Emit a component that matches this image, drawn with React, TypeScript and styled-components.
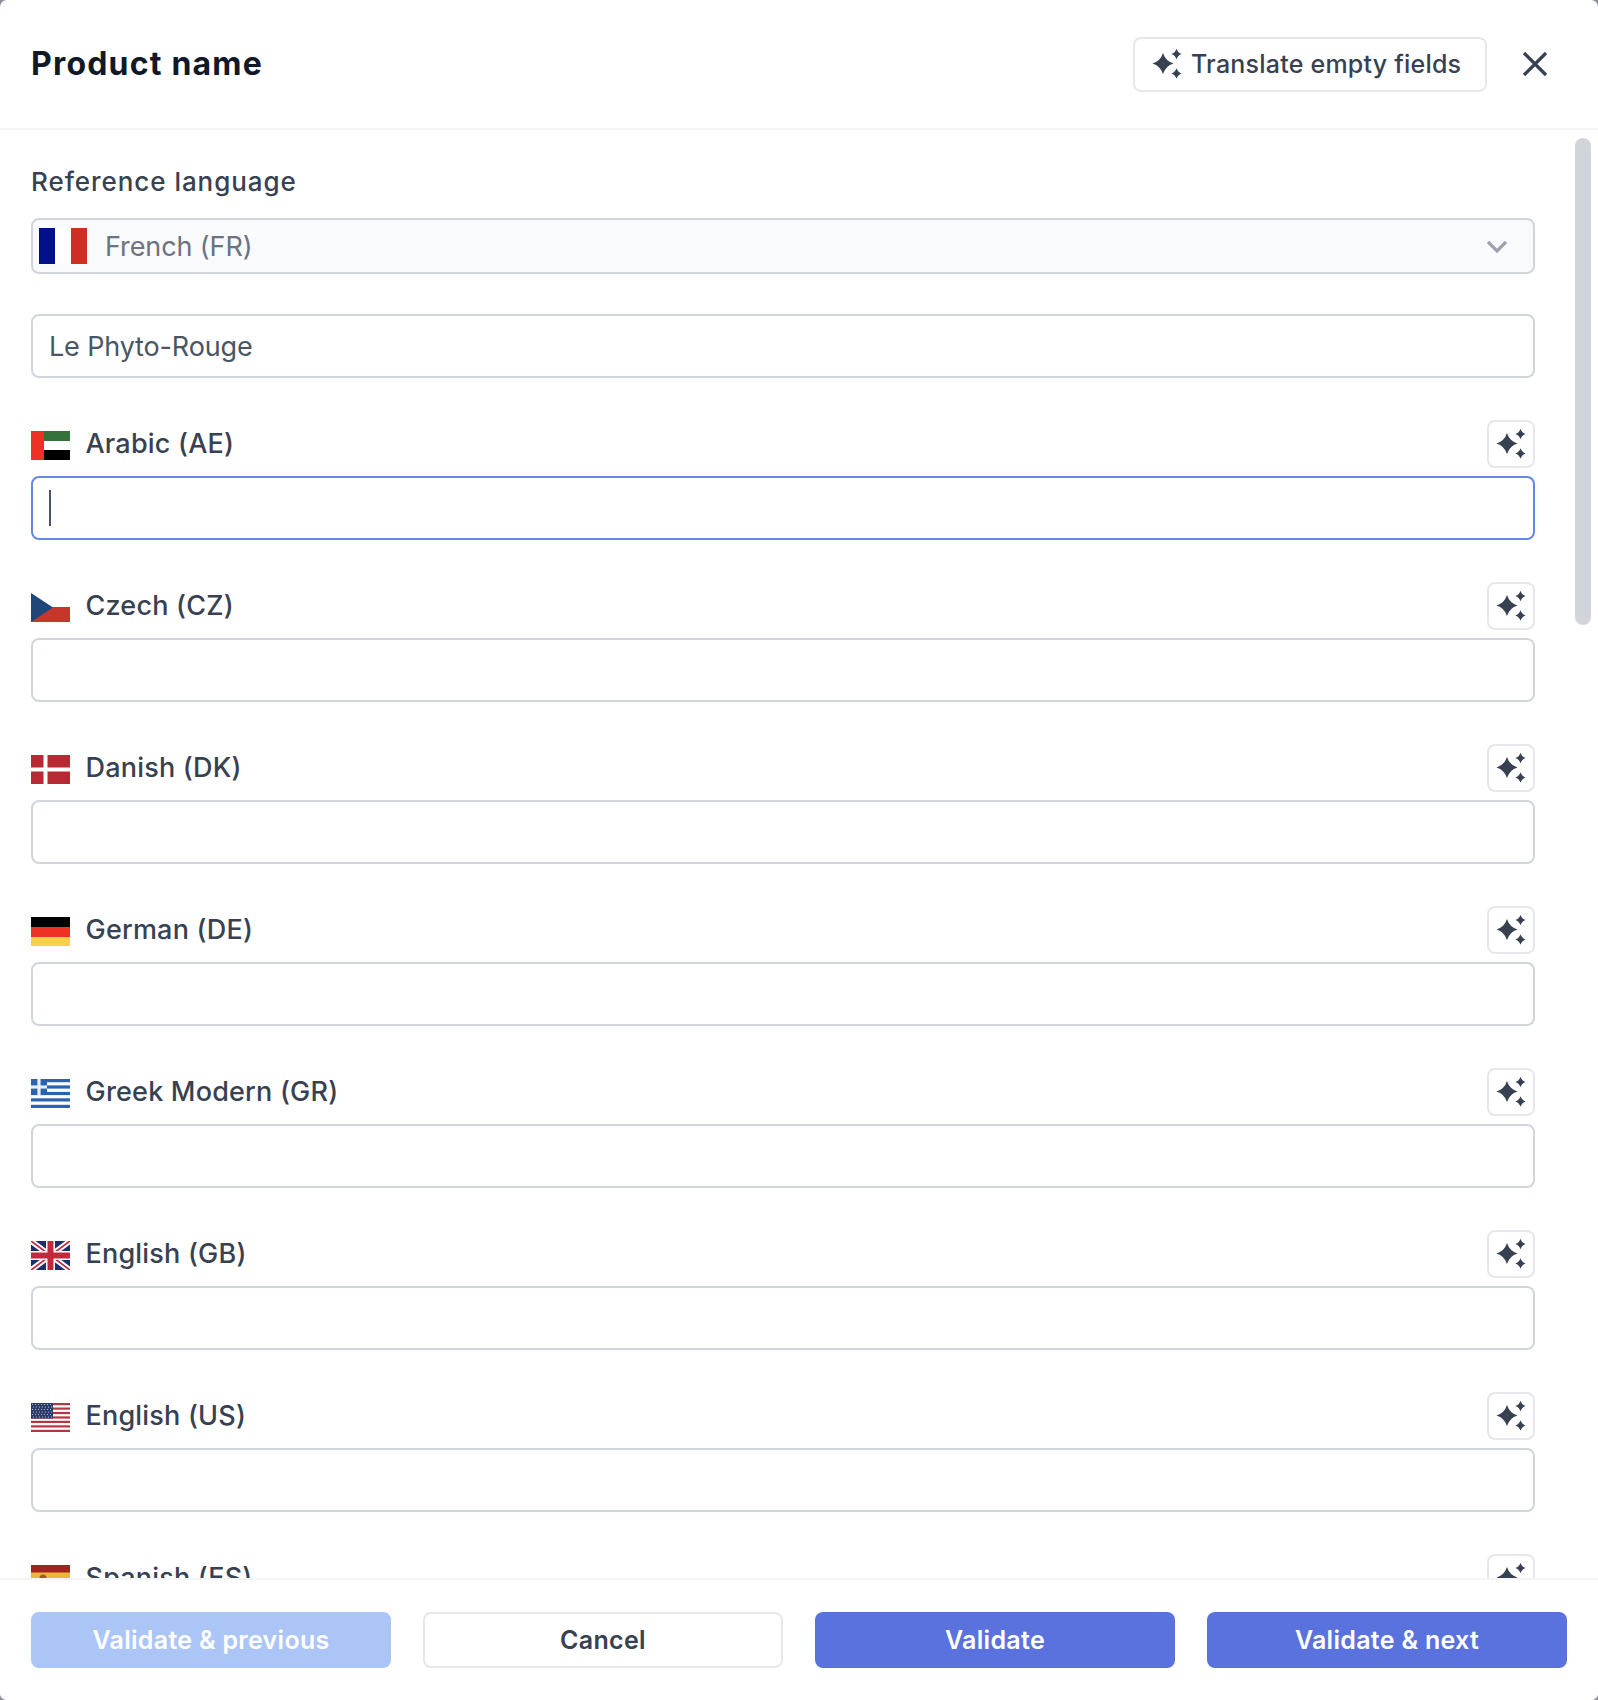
import React from "react";
import styled, { createGlobalStyle } from "styled-components";

const Global = createGlobalStyle`
  html, body { margin: 0; padding: 0; background: #8b8f96; }
  * { box-sizing: border-box; }
  #root { width: 1598px; height: 1700px; font-family: Inter, "Liberation Sans", sans-serif; }
`;

const Modal = styled.div`
  width: 1598px; height: 1700px; background: #fff; border-radius: 7px;
  display: flex; flex-direction: column; overflow: hidden;
`;
const Header = styled.header`
  flex: none; height: 130px; border-bottom: 2px solid #f3f4f6;
  padding: 0 31px; display: flex; align-items: center;
`;
const Title = styled.h1`
  margin: 0; flex: 1; font-size: 32px; font-weight: 700; color: #111827; letter-spacing: 1.2px; line-height: 40px;
`;
const TranslateButton = styled.button`
  height: 55px; width: 354px; border: 2px solid #e5e7eb; border-radius: 8px; background: #fff;
  display: flex; align-items: center; padding: 0 0 0 17px; gap: 9px; font: inherit;
  font-size: 25px; font-weight: 500; color: #374151; letter-spacing: 0.22px; white-space: nowrap;
`;
const CloseButton = styled.button`
  width: 60px; height: 60px; margin-left: 18px; margin-right: 2px; border: 0; background: none; padding: 0;
  display: flex; align-items: center; justify-content: center; color: #374151;
`;
const Body = styled.main`
  flex: 1; min-height: 0; position: relative; overflow: hidden; padding: 34px 63px 0 31px;
`;
const ScrollThumb = styled.div`
  position: absolute; top: 8px; right: 7px; width: 16px; height: 487px; background: #d1d5db; border-radius: 8px;
`;
const SectionLabel = styled.div`
  font-size: 26px; font-weight: 500; line-height: 36px; color: #374151; margin-bottom: 18px; letter-spacing: 0.95px;
`;
const Select = styled.div`
  height: 56px; background: #f9fafb; border: 2px solid #d1d5db; border-radius: 8px;
  display: flex; align-items: center; padding: 0 26px 0 6px; margin-bottom: 40px;
`;
const SelectText = styled.span`
  flex: 1; margin-left: 18px; font-size: 27px; color: #6b7280; letter-spacing: -0.1px;
`;
const Field = styled.div<{ $focus?: boolean }>`
  height: 64px; background: #fff; border: 2px solid ${(p) => (p.$focus ? "#6687e8" : "#d1d5db")};
  border-radius: 8px; display: flex; align-items: center; padding: 0 16px;
  font-size: 27px; color: #4b5563; margin-bottom: 42px; letter-spacing: -0.15px;
`;
const Caret = styled.span`
  width: 2px; height: 36px; background: #475569;
`;
const RowHead = styled.div`
  height: 48px; margin-bottom: 8px; display: flex; align-items: center; gap: 16px;
`;
const FlagBox = styled.span`
  flex: none; display: flex; width: 39px; height: 29px; margin-top: 3px;
`;
const LangName = styled.span`
  flex: 1; font-size: 27px; font-weight: 500; color: #374151; letter-spacing: 0.2px; margin-top: -2px; margin-left: -0.5px;
`;
const MagicButton = styled.button`
  flex: none; width: 48px; height: 48px; border: 2px solid #e5e7eb; border-radius: 8px; background: #fff;
  padding: 0; display: flex; align-items: center; justify-content: center;
`;
const Footer = styled.footer`
  flex: none; height: 122px; border-top: 2px solid #f3f4f6; background: #fff;
  padding: 32px 31px; display: grid; grid-template-columns: repeat(4, 360px); gap: 32px;
`;
const FootButton = styled.button<{ $kind: "primary" | "disabled" | "ghost" }>`
  height: 56px; border-radius: 8px; font: inherit; font-size: 25px; font-weight: 600; padding: 0; letter-spacing: 0.3px;
  border: ${(p) => (p.$kind === "ghost" ? "2px solid #e5e7eb" : "0")};
  background: ${(p) => (p.$kind === "primary" ? "#5a72de" : p.$kind === "disabled" ? "#abc5f6" : "#fff")};
  color: ${(p) => (p.$kind === "ghost" ? "#374151" : "#fff")};
`;

const star = (cx: number, cy: number, r: number) => {
  const k = r * 0.24;
  return `M${cx} ${cy - r}Q${cx + k} ${cy - k} ${cx + r} ${cy}Q${cx + k} ${cy + k} ${cx} ${cy + r}Q${cx - k} ${cy + k} ${cx - r} ${cy}Q${cx - k} ${cy - k} ${cx} ${cy - r}Z`;
};
const Sparkles = () => (
  <svg width="30" height="30" viewBox="0 0 30 30" fill="#374151" style={{ flex: "none" }}>
    <path d={star(11, 14.5, 10.5)} />
    <path d={star(24.5, 5, 5.2)} />
    <path d={star(24.5, 24.5, 5.2)} />
  </svg>
);

const F = ({ children, w = 39, h = 29 }: { children: React.ReactNode; w?: number; h?: number }) => (
  <svg width={w} height={h} viewBox={`0 0 ${w} ${h}`} preserveAspectRatio="none">{children}</svg>
);

const Flags: Record<string, React.ReactNode> = {
  AE: (
    <F>
      <rect width="39" height="10" fill="#35713a" />
      <rect y="10" width="39" height="9" fill="#fff" />
      <rect y="19" width="39" height="10" fill="#000" />
      <rect width="13" height="29" fill="#ee3124" />
    </F>
  ),
  CZ: (
    <F>
      <rect y="14" width="39" height="15" fill="#c8352b" />
      <path d="M0 0L22 14.5L0 29Z" fill="#1e4679" />
    </F>
  ),
  DK: (
    <F>
      <rect width="39" height="29" fill="#b72a33" />
      <rect x="12.5" width="4" height="29" fill="#fff" />
      <rect y="12.5" width="39" height="4" fill="#fff" />
    </F>
  ),
  DE: (
    <F>
      <rect width="39" height="10" fill="#000" />
      <rect y="10" width="39" height="10" fill="#ee3124" />
      <rect y="20" width="39" height="9" fill="#fad049" />
    </F>
  ),
  GR: (
    <F>
      {[0, 6.4, 12.9, 19.3, 25.8].map((y) => (
        <rect key={y} y={y} width="39" height="3.2" fill="#2a63b1" />
      ))}
      <rect width="16" height="16" fill="#2a63b1" />
      <rect x="6.4" width="3.2" height="16" fill="#e9eef7" />
      <rect y="6.4" width="16" height="3.2" fill="#e9eef7" />
    </F>
  ),
  GB: (
    <F>
      <rect width="39" height="29" fill="#1a2f6b" />
      <path d="M0 0L39 29M39 0L0 29" stroke="#fff" strokeWidth="5.5" />
      <path d="M0 0L39 29M39 0L0 29" stroke="#c5283d" strokeWidth="1.8" />
      <rect x="15" width="9" height="29" fill="#fff" />
      <rect y="10" width="39" height="9" fill="#fff" />
      <rect x="16.5" width="6" height="29" fill="#c5283d" />
      <rect y="11.5" width="39" height="6" fill="#c5283d" />
    </F>
  ),
  US: (
    <F>
      {[0, 4.5, 8.9, 13.4, 17.8, 22.3, 26.8].map((y) => (
        <rect key={y} y={y} width="39" height="2.2" fill="#b5363f" />
      ))}
      <rect width="22" height="15.6" fill="#2d3a6b" />
      {[1.5, 4, 6.5, 9, 11.5, 14].map((y, i) =>
        [1.5, 4.5, 7.5, 10.5, 13.5, 16.5, 19.5].map((x) => (
          <circle key={`${x}-${y}`} cx={x + (i % 2)} cy={y} r="0.55" fill="#c8cfe6" />
        ))
      )}
    </F>
  ),
  ES: (
    <F>
      <rect width="39" height="29" fill="#a2231f" />
      <rect y="7.5" width="39" height="14.5" fill="#edb63b" />
      <circle cx="12" cy="13" r="3.5" fill="#a8552a" />
    </F>
  ),
};

const rows = [
  { code: "AE", name: "Arabic (AE)", focus: true },
  { code: "CZ", name: "Czech (CZ)" },
  { code: "DK", name: "Danish (DK)" },
  { code: "DE", name: "German (DE)" },
  { code: "GR", name: "Greek Modern (GR)" },
  { code: "GB", name: "English (GB)" },
  { code: "US", name: "English (US)" },
  { code: "ES", name: "Spanish (ES)" },
];

export default function App() {
  return (
    <>
      <Global />
      <Modal>
        <Header>
          <Title>Product name</Title>
          <TranslateButton>
            <Sparkles />
            Translate empty fields
          </TranslateButton>
          <CloseButton aria-label="Close">
            <svg width="30" height="30" viewBox="0 0 30 30" fill="none" stroke="currentColor" strokeWidth="3.2">
              <path d="M4 4L26 26M26 4L4 26" />
            </svg>
          </CloseButton>
        </Header>
        <Body>
          <ScrollThumb />
          <SectionLabel>Reference language</SectionLabel>
          <Select>
            <F w={48} h={36}>
              <rect width="16" height="36" fill="#000f8a" />
              <rect x="16" width="16" height="36" fill="#fff" />
              <rect x="32" width="16" height="36" fill="#d02d23" />
            </F>
            <SelectText>French (FR)</SelectText>
            <svg width="20" height="13" viewBox="0 0 20 13" fill="none" stroke="#9ca3af" strokeWidth="3.2">
              <path d="M1 2L10 11L19 2" />
            </svg>
          </Select>
          <Field>Le Phyto-Rouge</Field>
          {rows.map((r) => (
            <div key={r.code}>
              <RowHead>
                <FlagBox>{Flags[r.code]}</FlagBox>
                <LangName>{r.name}</LangName>
                <MagicButton>
                  <Sparkles />
                </MagicButton>
              </RowHead>
              <Field $focus={r.focus}>{r.focus ? <Caret /> : null}</Field>
            </div>
          ))}
        </Body>
        <Footer>
          <FootButton $kind="disabled">Validate &amp; previous</FootButton>
          <FootButton $kind="ghost">Cancel</FootButton>
          <FootButton $kind="primary">Validate</FootButton>
          <FootButton $kind="primary">Validate &amp; next</FootButton>
        </Footer>
      </Modal>
    </>
  );
}
